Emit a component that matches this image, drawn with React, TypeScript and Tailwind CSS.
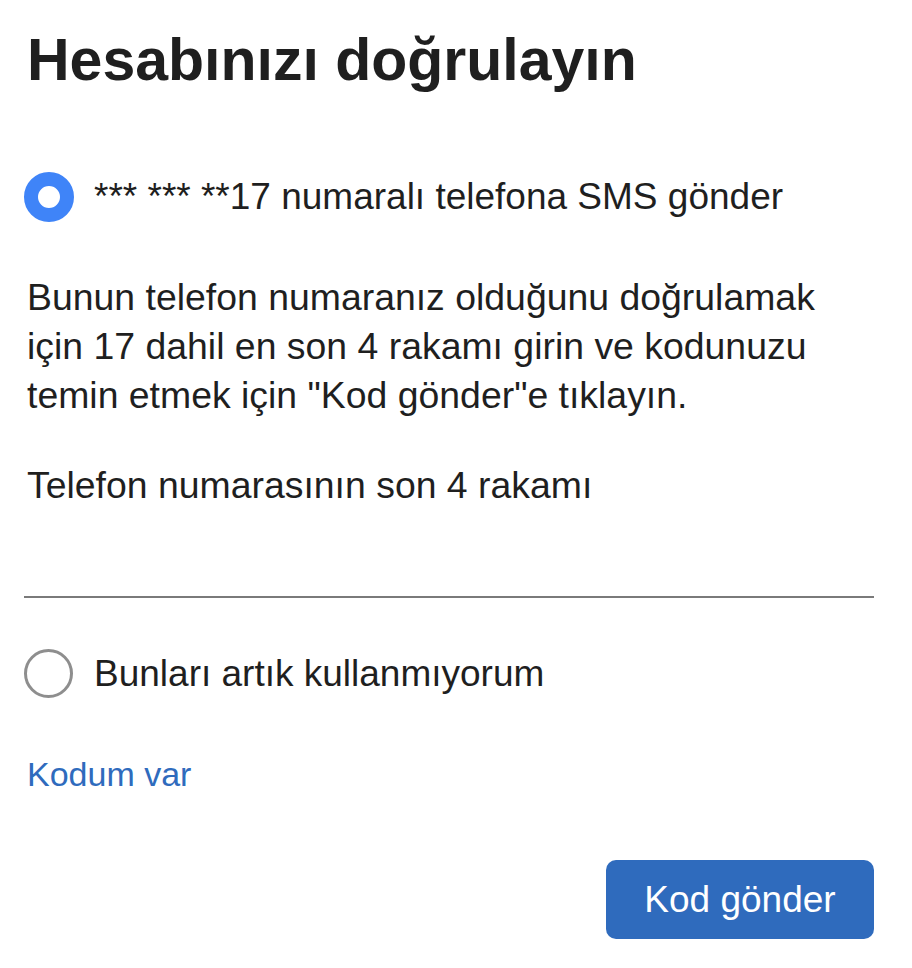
import { useState } from "react";

export default function App() {
  const [choice, setChoice] = useState<"sms" | "none">("sms");
  const [digits, setDigits] = useState("");

  return (
    <div className="min-h-screen bg-white pl-6 pr-[38px] pt-[25px] font-['Liberation_Sans',Arial,sans-serif] text-[#1f1f1f]">
      <h1 className="pl-[3px] text-[59px] font-bold leading-[1.2]">Hesabınızı doğrulayın</h1>

      <label className="mt-[76px] flex cursor-pointer items-center gap-5" onClick={() => setChoice("sms")}>
        <span
          className={`h-[50px] w-[50px] shrink-0 rounded-full ${
            choice === "sms" ? "border-[14px] border-[#3f84f8]" : "border-[3px] border-[#8e8e8e]"
          }`}
        />
        <span className="text-[37px] leading-[49px]">*** *** **17 numaralı telefona SMS gönder</span>
      </label>

      <p className="mt-[51px] max-w-[823px] pl-[3px] text-[37.4px] leading-[49px]">
        Bunun telefon numaranız olduğunu doğrulamak için 17 dahil en son 4 rakamı girin ve kodunuzu temin etmek
        için "Kod gönder"e tıklayın.
      </p>

      <div className="mt-[41px] pl-[3px] text-[37.4px] leading-[49px]">Telefon numarasının son 4 rakamı</div>
      <input
        value={digits}
        onChange={(e) => setDigits(e.target.value)}
        className="block h-[88px] w-full border-b-2 border-[#7a7a7a] bg-transparent text-[37px] outline-none"
      />

      <label className="mt-[51px] flex cursor-pointer items-center gap-[21px]" onClick={() => setChoice("none")}>
        <span
          className={`h-[49px] w-[49px] shrink-0 rounded-full ${
            choice === "none" ? "border-[14px] border-[#3f84f8]" : "border-[3px] border-[#8e8e8e]"
          }`}
        />
        <span className="text-[37px] leading-[49px]">Bunları artık kullanmıyorum</span>
      </label>

      <a href="#" className="mt-[56px] block w-fit pl-[3px] text-[34px] leading-[40px] text-[#2f6bbd]">
        Kodum var
      </a>

      <div className="mt-[66px] flex justify-end">
        <button className="h-[79px] w-[268px] rounded-[10px] bg-[#2f6bbd] text-[37px] text-white">Kod gönder</button>
      </div>
    </div>
  );
}
